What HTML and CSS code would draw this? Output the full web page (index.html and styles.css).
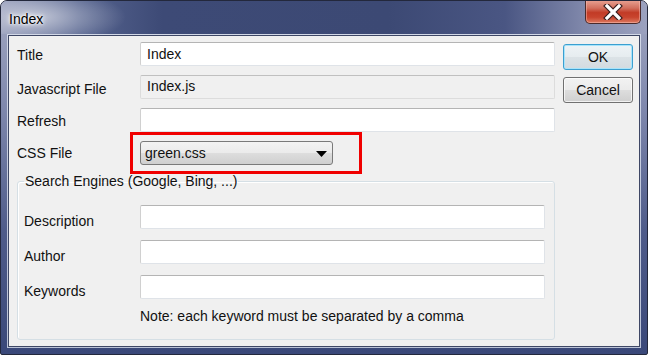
FILE: index.html
```html
<!DOCTYPE html>
<html>
<head>
<meta charset="utf-8">
<link rel="stylesheet" href="styles.css">
</head>
<body>
<div class="window">
  <div class="titlebar">
    <span class="title">Index</span>
    <div class="close">
      <svg width="22" height="16" viewBox="0 0 22 16">
        <path d="M5 2 L17 14 M17 2 L5 14" stroke="#3a2020" stroke-width="5.5" stroke-linecap="square"/>
        <path d="M5 2 L17 14 M17 2 L5 14" stroke="#ffffff" stroke-width="3.2" stroke-linecap="square"/>
      </svg>
    </div>
  </div>
  <div class="client">
    <div class="main">
      <div class="rows">
        <label class="lbl">Title</label>
        <div class="input">Index</div>
        <label class="lbl lbl-low">Javascript File</label>
        <div class="input disabled">Index.js</div>
        <label class="lbl">Refresh</label>
        <div class="input"></div>
        <label class="lbl lbl-up">CSS File</label>
        <div class="select-wrap">
          <div class="select">
            <span>green.css</span>
            <svg class="arrow" width="11" height="6" viewBox="0 0 11 6"><path d="M0 0 H11 L5.5 6 Z" fill="#000"/></svg>
          </div>
          <div class="highlight"></div>
        </div>
      </div>
      <fieldset class="group">
        <legend>Search Engines (Google, Bing, ...)</legend>
        <div class="grows">
          <label class="lbl glbl">Description</label>
          <div class="input"></div>
          <label class="lbl glbl">Author</label>
          <div class="input"></div>
          <label class="lbl glbl">Keywords</label>
          <div class="input"></div>
          <span></span>
          <div class="note">Note: each keyword must be separated by a comma</div>
        </div>
      </fieldset>
    </div>
    <div class="buttons">
      <button class="btn btn-default">OK</button>
      <button class="btn">Cancel</button>
    </div>
  </div>
</div>
</body>
</html>
```
FILE: styles.css
```css
html, body {
  margin: 0;
  padding: 0;
  background: #ffffff;
}
body {
  font-family: "Liberation Sans", Arial, sans-serif;
  font-size: 14px;
  color: #111;
}
.window {
  width: 648px;
  height: 355px;
  box-sizing: border-box;
  border: 1px solid #23283c;
  border-radius: 7px 7px 2px 2px;
  background: linear-gradient(to bottom, #a3a9c2 0%, #7f88ad 30%, #4f5c8a 65%, #3a4879 100%);
  display: flex;
  flex-direction: column;
  overflow: hidden;
}
.titlebar {
  height: 33px;
  display: flex;
  align-items: flex-start;
  justify-content: space-between;
  background:
    radial-gradient(ellipse 90px 28px at 35px 16px, rgba(255,255,255,0.55), rgba(255,255,255,0) 100%),
    linear-gradient(to right, #8f97b6 0%, #56648f 12%, #3d4a76 25%, #3c4974 60%, #4a5683 78%, #7f87aa 90%, #9ca2bf 100%);
}
.title {
  margin: 10px 0 0 8px;
  color: #000;
  line-height: 17px;
  text-shadow: 0 0 6px #fff, 0 0 4px #fff, 0 0 2px #fff;
}
.close {
  width: 56px;
  height: 24px;
  margin-right: 6px;
  margin-top: -1px;
  box-sizing: border-box;
  border: 1px solid #4a2a2a;
  border-top: none;
  border-radius: 0 0 5px 5px;
  background: linear-gradient(to bottom, #e9a394 0%, #d2705e 35%, #c23b26 55%, #c8442e 75%, #dd7a60 100%);
  box-shadow: inset 0 0 0 1px rgba(255,200,190,0.45);
  display: flex;
  align-items: center;
  justify-content: center;
}
.client {
  flex: 1;
  margin: 1px 7px 7px 7px;
  background: #f0f0f0;
  border: 1px solid #3e4765;
  box-shadow: 0 0 0 1px rgba(230,235,245,0.75);
  display: flex;
  padding: 6px 0 0 8px;
  gap: 8px;
}
.main {
  width: 538px;
  display: flex;
  flex-direction: column;
}
.rows {
  display: grid;
  grid-template-columns: 123px 415px;
  grid-auto-rows: 25px;
  row-gap: 8px;
}
.lbl {
  display: flex;
  align-items: center;
  color: #111;
}
.lbl-low {
  padding-top: 3px;
}
.lbl-up {
  padding-bottom: 2px;
}
.glbl {
  padding-top: 7px;
}
.input {
  box-sizing: border-box;
  height: 24px;
  background: #fff;
  border: 1px solid #dfe3e8;
  border-top-color: #b4b4b4;
  border-left-color: #d0d0d0;
  border-radius: 2px;
  padding: 0 6px;
  display: flex;
  align-items: center;
  color: #111;
}
.input.disabled {
  background: #f0f0f0;
  border-color: #dcdcdc;
  border-top-color: #c0c0c0;
  align-items: flex-start;
  padding-top: 2px;
}
.select-wrap {
  position: relative;
}
.select {
  box-sizing: border-box;
  width: 193px;
  height: 24px;
  border: 1px solid #7a7a7a;
  border-radius: 3px;
  background: linear-gradient(to bottom, #f3f3f3 0%, #ebebeb 48%, #dddddd 52%, #cfcfcf 100%);
  display: flex;
  align-items: center;
  justify-content: space-between;
  padding: 0 5px 0 4px;
  color: #111;
}
.arrow {
  margin-top: 1px;
}
.highlight {
  position: absolute;
  left: -10px;
  top: -9px;
  width: 232px;
  height: 42px;
  box-sizing: border-box;
  border: 3px solid #f00000;
}
.group {
  margin: 7px 0 0 0;
  padding: 6px 9px 0 6px;
  height: 167px;
  box-sizing: border-box;
  border: 1px solid #d5dfe5;
  border-radius: 3px;
  box-shadow: inset 1px 1px 0 #fff;
}
.group legend {
  padding: 0 1px;
  margin-left: 0;
  color: #111;
}
.grows {
  display: grid;
  grid-template-columns: 116px 405px;
  grid-template-rows: 24px 24px 24px 24px;
  row-gap: 11px;
  margin-top: 10px;
}
.note {
  display: flex;
  align-items: center;
  margin-top: -12px;
  color: #111;
}
.buttons {
  width: 70px;
  display: flex;
  flex-direction: column;
  gap: 7px;
  margin-top: 2px;
}
.btn {
  font-family: "Liberation Sans", Arial, sans-serif;
  font-size: 14px;
  color: #111;
  height: 26px;
  box-sizing: border-box;
  border: 1px solid #707070;
  border-radius: 3px;
  background: linear-gradient(to bottom, #f2f2f2 0%, #ebebeb 48%, #dddddd 52%, #cfcfcf 100%);
  box-shadow: inset 0 0 0 1px rgba(255,255,255,0.7);
  padding: 0;
}
.btn-default {
  border-color: #3c9fd0;
  background: linear-gradient(to bottom, #eef3f6 0%, #e6ecef 48%, #dbe2e6 52%, #d3dbe0 100%);
  box-shadow: inset 0 0 0 1px #a8e4fb;
}
```
